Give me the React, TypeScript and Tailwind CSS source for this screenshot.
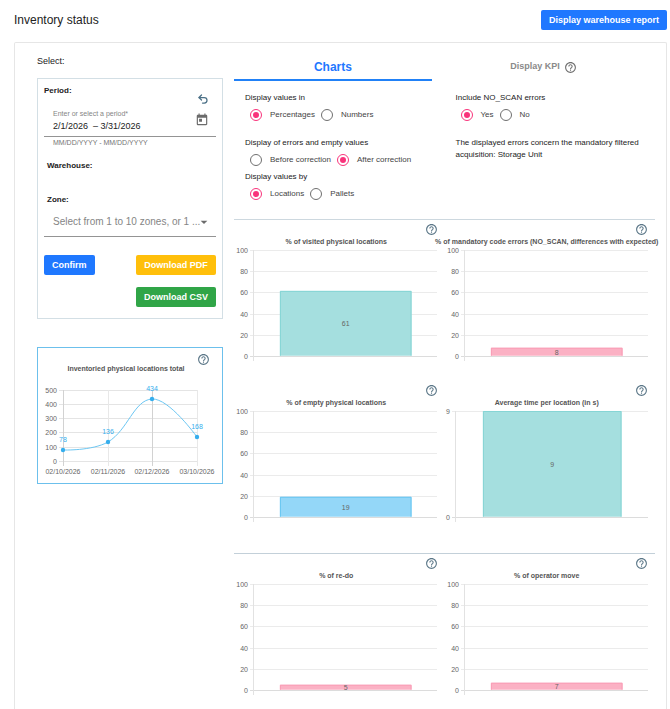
import type { ReactNode } from "react";
import { Undo2 } from "lucide-react";
import { MdArrowDropDown, MdHelpOutline, MdToday } from "react-icons/md";

interface BarChartProps {
  title: string;
  value: number;
  max?: number;
  ticks?: number[];
  axisX?: number;
  fill: string;
  stroke: string;
}

interface RadioGroupProps {
  name: string;
  legend: string;
  options: string[];
  selected: string;
}

const TEAL = { fill: "#a5dfdf", stroke: "#86d5d5" };
const PINK = { fill: "#fbb1c4", stroke: "#f99db6" };
const BLUE = { fill: "#94d7f8", stroke: "#67c6f1" };

const HelpButton = ({ label }: { label: string }) => (
  <button type="button" aria-label={label} className="text-[#5a7687]">
    <MdHelpOutline className="size-[13px]" />
  </button>
);

const Button = ({
  children,
  className,
}: {
  children: ReactNode;
  className: string;
}) => (
  <button
    type="button"
    className={`h-5 rounded-xs px-2 text-[9px] leading-5 font-bold whitespace-nowrap text-white ${className}`}
  >
    {children}
  </button>
);

const RadioGroup = ({ name, legend, options, selected }: RadioGroupProps) => (
  <fieldset>
    <legend className="h-4 text-[8px] leading-4">{legend}</legend>
    <div className="flex h-[18px] items-center gap-1.5 pl-[5px]">
      {options.map((option) => (
        <label key={option} className="flex items-center gap-2 text-[8px] text-[#444]">
          <input
            type="radio"
            name={name}
            defaultChecked={option === selected}
            className="grid size-3 shrink-0 appearance-none place-items-center rounded-full border border-[#6f6f6f] before:size-1.5 before:rounded-full before:content-[''] checked:border-[#f9337b] checked:before:bg-[#f9337b]"
          />
          {option}
        </label>
      ))}
    </div>
  </fieldset>
);

const BarChart = ({
  title,
  value,
  max = 100,
  ticks = [0, 20, 40, 60, 80, 100],
  axisX = 20,
  fill,
  stroke,
}: BarChartProps) => {
  const top = 2;
  const bottom = 108;
  const right = 204;
  const y = (v: number) => Math.round(bottom - (v / max) * (bottom - top));
  const barWidth = Math.round((right - axisX) * 0.72);
  const barX = Math.floor(axisX + (right - axisX - barWidth) / 2);
  const barY = y(value);

  return (
    <article className="min-w-0 pt-[3px] pr-1.5">
      <div className="flex justify-end pr-px">
        <HelpButton label={`About ${title}`} />
      </div>
      <h3 className="flex h-3 justify-center text-[7px] leading-3 font-bold whitespace-nowrap text-[#555]">
        {title}
      </h3>
      <svg viewBox="0 0 205 117" className="block w-full" role="img" aria-label={title}>
        <g shapeRendering="crispEdges" fill="none">
          {ticks.map((t) => (
            <path key={t} d={`M${axisX - 4} ${y(t) + 0.5}H${right}`} stroke={t === 0 ? "#dcdcdc" : "#ebebeb"} />
          ))}
          <path d={`M${axisX - 0.5} ${top}V${bottom + 5}`} stroke="#e2e2e2" />
        </g>
        <rect x={barX} y={barY} width={barWidth} height={bottom - barY} fill={fill} />
        <path
          d={`M${barX + 0.5} ${bottom}V${barY + 0.5}H${barX + barWidth - 0.5}V${bottom}`}
          fill="none"
          stroke={stroke}
        />
        <g fontSize="7" fill="#666">
          {ticks.map((t) => (
            <text key={t} x={axisX - 6} y={y(t) + 3} textAnchor="end">
              {t}
            </text>
          ))}
          <text x={barX + barWidth / 2} y={(barY + bottom) / 2 + 3} textAnchor="middle">
            {value}
          </text>
        </g>
      </svg>
    </article>
  );
};

const points = [
  { date: "02/10/2026", value: 78, x: 25, y: 85 },
  { date: "02/11/2026", value: 136, x: 70, y: 77 },
  { date: "02/12/2026", value: 434, x: 114, y: 34 },
  { date: "03/10/2026", value: 168, x: 159, y: 72 },
];

const LineChart = () => (
  <article className="mt-7 border border-[#6cc0ec]">
    <div className="flex justify-end pt-[5px] pr-3">
      <HelpButton label="About inventoried physical locations total" />
    </div>
    <svg
      viewBox="0 0 184 117"
      className="block w-full overflow-visible"
      role="img"
      aria-label="Inventoried physical locations total"
    >
      <text x="88" y="5" textAnchor="middle" fontSize="7" fontWeight="700" fill="#555">
        Inventoried physical locations total
      </text>
      <g shapeRendering="crispEdges">
        {[0, 100, 200, 300, 400, 500].map((t) => (
          <path key={t} d={`M21 ${Math.round(95 - t * 0.143) + 0.5}H159`} stroke="#e4e4e4" />
        ))}
        {points.map((p, i) => (
          <path key={p.date} d={`M${p.x + 0.5} 24V100`} stroke={i % 2 ? "#e8e8e8" : "#d2d2d2"} />
        ))}
      </g>
      <path
        d="M25 84C25 84 54 85 70 76C90 64 96 34 114 33C131 32 159 71 159 71"
        fill="none"
        stroke="#6cc7f3"
      />
      <g fontSize="7" fill="#666">
        {[0, 100, 200, 300, 400, 500].map((t) => (
          <text key={t} x="19" y={Math.round(95 - t * 0.143) + 3} textAnchor="end">
            {t}
          </text>
        ))}
        {points.map((p) => (
          <text key={p.date} x={p.x} y="108" textAnchor="middle">
            {p.date}
          </text>
        ))}
      </g>
      {points.map((p) => (
        <g key={p.date} fill="#36aeed">
          <circle cx={p.x} cy={p.y - 1} r="2.2" />
          <text x={p.x} y={p.y - 9} textAnchor="middle" fontSize="7">
            {p.value}
          </text>
        </g>
      ))}
    </svg>
  </article>
);

const Filters = () => (
  <form
    className="border border-[#d3dfe5] px-1.5 pt-1.5 pb-[11px]"
    onSubmit={(e) => e.preventDefault()}
  >
    <div className="flex h-[19px] justify-between">
      <label htmlFor="period" className="text-[8px] leading-3 font-bold">
        Period:
      </label>
      <button type="button" aria-label="Reset period" className="mt-2 mr-[7px] h-3 text-[#4c7187]">
        <Undo2 className="size-3" strokeWidth={2.5} />
      </button>
    </div>
    <div className="mt-1 flex items-center justify-between border-b border-[#949494] pr-[7px] pb-1 pl-[9px]">
      <div className="min-w-0 flex-1">
        <label htmlFor="period" className="block text-[7px] leading-3 text-[#858585]">
          Enter or select a period*
        </label>
        <input
          id="period"
          type="text"
          defaultValue="2/1/2026  – 3/31/2026"
          className="block h-3 w-full text-[9px] leading-3 text-[#222]"
        />
      </div>
      <button type="button" aria-label="Open calendar" className="text-[#6b6b6b]">
        <MdToday className="size-3.5" />
      </button>
    </div>
    <p className="pl-[9px] text-[7px] leading-3 text-[#757575]">MM/DD/YYYY - MM/DD/YYYY</p>
    <p className="mt-[11px] pl-[3px] text-[8px] leading-3 font-bold">Warehouse:</p>
    <label htmlFor="zone" className="mt-[22px] block pl-[3px] text-[8px] leading-3 font-bold">
      Zone:
    </label>
    <div className="relative border-b border-[#949494]">
      <select
        id="zone"
        className="block h-[30px] w-full appearance-none pl-[9px] text-[10px] text-[#858585]"
      >
        <option>Select from 1 to 10 zones, or 1 ...</option>
      </select>
      <MdArrowDropDown className="pointer-events-none absolute top-2 right-1 size-4 text-[#6b6b6b]" />
    </div>
    <div className="mt-[18px] flex items-start justify-between">
      <Button className="bg-[#1f78ff]">Confirm</Button>
      <div className="flex flex-col gap-3">
        <Button className="bg-[#ffbf0b]">Download PDF</Button>
        <Button className="bg-[#30a547]">Download CSV</Button>
      </div>
    </div>
  </form>
);

const Options = () => (
  <div className="grid grid-cols-2 pt-[9px] pb-4">
    <div className="pl-[11px]">
      <RadioGroup
        name="unit"
        legend="Display values in"
        options={["Percentages", "Numbers"]}
        selected="Percentages"
      />
      <div className="mt-[11px]">
        <RadioGroup
          name="correction"
          legend="Display of errors and empty values"
          options={["Before correction", "After correction"]}
          selected="After correction"
        />
        <RadioGroup
          name="by"
          legend="Display values by"
          options={["Locations", "Pallets"]}
          selected="Locations"
        />
      </div>
    </div>
    <div className="pl-[11px]">
      <RadioGroup
        name="noscan"
        legend="Include NO_SCAN errors"
        options={["Yes", "No"]}
        selected="Yes"
      />
      <p className="mt-[13px] text-[8px] leading-3">
        The displayed errors concern the mandatory filtered acquisition: Storage Unit
      </p>
    </div>
  </div>
);

const App = () => {
  return (
    <div className="flex min-h-screen flex-col bg-white pt-2.5 pr-[3px] pl-3.5 font-['Liberation_Sans',Arial,sans-serif] text-[#222]">
      <header className="mb-3 flex items-center justify-between">
        <h1 className="text-[12px] leading-5">Inventory status</h1>
        <Button className="bg-[#1f78ff]">Display warehouse report</Button>
      </header>

      <main className="flex flex-1 gap-[11px] rounded-t-xs border border-b-0 border-[#e6e6e6] pr-[11px] pl-[22px]">
        <aside className="w-[186px] shrink-0">
          <h2 className="pt-3 pb-[11px] text-[9px] leading-3">Select:</h2>
          <Filters />
          <LineChart />
        </aside>

        <div className="min-w-0 flex-1">
          <div role="tablist" className="flex">
            <button
              type="button"
              role="tab"
              aria-selected="true"
              className="h-[38px] w-[47%] border-b-2 border-[#2181f7] pt-3 text-[12px] font-bold text-[#1f78ff]"
            >
              Charts
            </button>
            <button
              type="button"
              role="tab"
              aria-selected="false"
              className="flex h-[38px] flex-1 items-center justify-center gap-1 pt-2.5 text-[9px] font-bold text-[#8a8a8a]"
            >
              Display KPI
              <MdHelpOutline className="size-[13px] text-[#6f6f6f]" />
            </button>
          </div>

          <Options />

          <section className="grid grid-cols-2 gap-y-4 border-t border-[#cdd8df] pb-7">
            <BarChart title="% of visited physical locations" value={61} {...TEAL} />
            <BarChart
              title="% of mandatory code errors (NO_SCAN, differences with expected)"
              value={8}
              {...PINK}
            />
            <BarChart title="% of empty physical locations" value={19} {...BLUE} />
            <BarChart
              title="Average time per location (in s)"
              value={9}
              max={9}
              ticks={[0, 9]}
              axisX={11}
              {...TEAL}
            />
          </section>
          <section className="grid grid-cols-2 border-t border-[#c3d0d9]">
            <BarChart title="% of re-do" value={5} {...PINK} />
            <BarChart title="% of operator move" value={7} {...PINK} />
          </section>
        </div>
      </main>
    </div>
  );
};

export default App;
